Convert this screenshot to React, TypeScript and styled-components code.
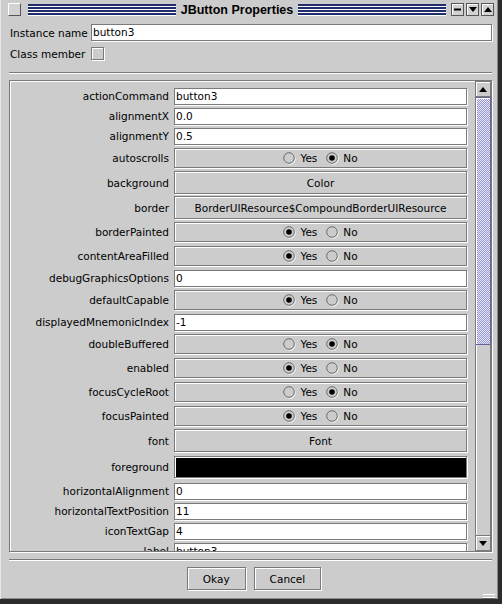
import React from "react";
import styled, { createGlobalStyle, css } from "styled-components";

const GlobalStyle = createGlobalStyle`
  html, body {
    margin: 0;
    padding: 0;
    background: #cccccc;
  }
  body {
    font-family: "DejaVu Sans", "Liberation Sans", sans-serif;
    font-size: 10.5px;
    color: #000;
  }
  * {
    box-sizing: border-box;
  }
`;

const GRAY = "#cccccc";
const DARK = "#7a7a7a";

// metal style etched edge: dark outline, white highlight inside top-left and outside bottom-right
const etched = css`
  border: 1px solid ${DARK};
  box-shadow: inset 1px 1px 0 #fff, 1px 1px 0 #fff;
`;

type Kind = "text" | "bool" | "button" | "color";

type Prop = {
  name: string;
  kind: Kind;
  value: string | boolean;
};

const rows: Prop[] = [
  { name: "actionCommand", kind: "text", value: "button3" },
  { name: "alignmentX", kind: "text", value: "0.0" },
  { name: "alignmentY", kind: "text", value: "0.5" },
  { name: "autoscrolls", kind: "bool", value: false },
  { name: "background", kind: "button", value: "Color" },
  { name: "border", kind: "button", value: "BorderUIResource$CompoundBorderUIResource" },
  { name: "borderPainted", kind: "bool", value: true },
  { name: "contentAreaFilled", kind: "bool", value: true },
  { name: "debugGraphicsOptions", kind: "text", value: "0" },
  { name: "defaultCapable", kind: "bool", value: true },
  { name: "displayedMnemonicIndex", kind: "text", value: "-1" },
  { name: "doubleBuffered", kind: "bool", value: false },
  { name: "enabled", kind: "bool", value: true },
  { name: "focusCycleRoot", kind: "bool", value: false },
  { name: "focusPainted", kind: "bool", value: true },
  { name: "font", kind: "button", value: "Font" },
  { name: "foreground", kind: "color", value: "#000000" },
  { name: "horizontalAlignment", kind: "text", value: "0" },
  { name: "horizontalTextPosition", kind: "text", value: "11" },
  { name: "iconTextGap", kind: "text", value: "4" },
  { name: "label", kind: "text", value: "button3" },
  { name: "margin", kind: "button", value: "Insets" },
];

const rowHeight: Record<Kind, number> = {
  text: 20,
  bool: 24,
  button: 25,
  color: 28,
};

const Window = styled.div`
  position: relative;
  width: 502px;
  height: 604px;
  display: flex;
  flex-direction: column;
  background: ${GRAY};
  border-right: 4px solid #2c2c2c;
  border-bottom: 5px solid #2c2c2c;
  box-shadow: inset 1px 0 0 #e6e6e6, inset -1px -1px 0 #8a8a8a;
`;

/* ---------- title bar ---------- */

const TitleBar = styled.div`
  height: 19px;
  flex: none;
  display: flex;
  align-items: center;
  padding: 0 4px 0 8px;
`;

const MenuBox = styled.div`
  width: 13px;
  height: 13px;
  margin-right: 7px;
  background: #d2d2d2;
  border: 1px solid;
  border-color: #fff #555 #555 #fff;
`;

const Stripes = styled.div`
  flex: 1;
  height: 12px;
  background: repeating-linear-gradient(to bottom, #1f2d6b 0 2px, #ffffff 2px 3px);
`;

const Title = styled.div`
  padding: 0 5px;
  font-family: "Liberation Sans", Arial, sans-serif;
  font-weight: bold;
  font-size: 12.5px;
  white-space: nowrap;
`;

const FrameButtons = styled.div`
  display: flex;
  gap: 2px;
  margin-left: 5px;
`;

const FrameButton = styled.div`
  width: 13px;
  height: 13px;
  display: flex;
  align-items: center;
  justify-content: center;
  background: #d2d2d2;
  border: 1px solid #555;
  box-shadow: inset 1px 1px 0 #fff;
`;

/* ---------- body ---------- */

const Body = styled.div`
  flex: 1;
  display: flex;
  flex-direction: column;
  padding: 5px 6px 0 9px;
`;

const HeaderGrid = styled.div`
  display: grid;
  grid-template-columns: 82px 1fr;
  grid-auto-rows: 17px;
  row-gap: 4px;
  align-items: center;
`;

const HeaderLabel = styled.span`
  padding-left: 1px;
  white-space: nowrap;
`;

const TextField = styled.div`
  height: 17px;
  padding: 0 2px 0 1px;
  background: #fff;
  line-height: 15px;
  white-space: nowrap;
  overflow: hidden;
  ${etched};
`;

const CheckBox = styled.div`
  width: 13px;
  height: 13px;
  background: ${GRAY};
  ${etched};
`;

const Separator = styled.div<{ $gap: number }>`
  flex: none;
  height: 2px;
  margin-top: ${(p) => p.$gap}px;
  border-top: 1px solid ${DARK};
  border-bottom: 1px solid #fff;
`;

const Panel = styled.div`
  flex: none;
  height: 472px;
  margin-top: 6px;
  display: flex;
  ${etched};
`;

const Viewport = styled.div`
  flex: 1;
  overflow: hidden;
  padding: 5px 8px 0 0;
`;

const Row = styled.div<{ $kind: Kind }>`
  height: ${(p) => rowHeight[p.$kind]}px;
  display: grid;
  grid-template-columns: 159px 1fr;
  column-gap: 5px;
  align-items: center;
`;

const PropName = styled.span`
  text-align: right;
  white-space: nowrap;
`;

const ValueBox = styled.div<{ $height: number }>`
  height: ${(p) => p.$height}px;
  display: flex;
  align-items: center;
  justify-content: center;
  background: ${GRAY};
  white-space: nowrap;
  ${etched};
`;

const Swatch = styled.div<{ $color: string }>`
  height: 22px;
  background: ${(p) => p.$color};
  ${etched};
`;

const RadioGroup = styled.div`
  display: flex;
  align-items: center;
  gap: 9px;
`;

const RadioOption = styled.span`
  display: flex;
  align-items: center;
  gap: 4px;
`;

/* ---------- scrollbar ---------- */

const ScrollBar = styled.div`
  width: 16px;
  flex: none;
  display: flex;
  flex-direction: column;
  background: ${GRAY};
  border-left: 1px solid ${DARK};
`;

const ArrowButton = styled.div`
  height: 16px;
  flex: none;
  display: flex;
  align-items: center;
  justify-content: center;
  background: ${GRAY};
  border: 1px solid ${DARK};
  border-left: none;
  box-shadow: inset 1px 1px 0 #fff;
`;

const Thumb = styled.div`
  height: 248px;
  flex: none;
  border: 1px solid #666699;
  border-left: none;
  background-color: #ccccff;
  background-image: repeating-conic-gradient(#9999cc 0 25%, #e6e6ff 0 50%);
  background-size: 2px 2px;
  box-shadow: inset 1px 1px 0 #fff;
`;

const Track = styled.div`
  flex: 1;
  border-right: 1px solid ${DARK};
  box-shadow: inset 1px 0 0 #fff;
`;

/* ---------- footer ---------- */

const Footer = styled.div`
  display: flex;
  justify-content: center;
  gap: 8px;
  margin-top: 6px;
  padding-left: 7px;
`;

const PushButton = styled.div`
  height: 23px;
  min-width: 57px;
  padding: 0 15px;
  display: flex;
  align-items: center;
  justify-content: center;
  background: ${GRAY};
  ${etched};
`;

const Grip = styled.div`
  position: absolute;
  right: 3px;
  bottom: 1px;
  width: 12px;
  height: 4px;
  border-top: 1px solid #fff;
  border-bottom: 1px solid #fff;
  box-shadow: 0 1px 0 #666;
`;

const Triangle = ({ up }: { up?: boolean }) => (
  <svg width="8" height="5" viewBox="0 0 8 5">
    <path d={up ? "M0 5 L4 0 L8 5 Z" : "M0 0 L8 0 L4 5 Z"} fill="#000" />
  </svg>
);

const Radio = ({ checked }: { checked: boolean }) => (
  <svg width="13" height="13" viewBox="0 0 13 13">
    <circle cx="6.9" cy="6.9" r="5.3" fill="none" stroke="#fff" />
    <circle cx="6" cy="6" r="5.3" fill={GRAY} stroke="#6a6a6a" />
    {checked && <circle cx="6" cy="6" r="2.8" fill="#000" />}
  </svg>
);

const Value = ({ prop }: { prop: Prop }) => {
  switch (prop.kind) {
    case "text":
      return <TextField>{prop.value as string}</TextField>;
    case "button":
      return <ValueBox $height={23}>{prop.value as string}</ValueBox>;
    case "color":
      return <Swatch $color={prop.value as string} />;
    case "bool":
      return (
        <ValueBox $height={20}>
          <RadioGroup>
            <RadioOption>
              <Radio checked={prop.value === true} />
              Yes
            </RadioOption>
            <RadioOption>
              <Radio checked={prop.value === false} />
              No
            </RadioOption>
          </RadioGroup>
        </ValueBox>
      );
  }
};

export default function App() {
  return (
    <Window>
      <GlobalStyle />
      <TitleBar>
        <MenuBox />
        <Stripes />
        <Title>JButton Properties</Title>
        <Stripes />
        <FrameButtons>
          <FrameButton>
            <svg width="7" height="3" viewBox="0 0 7 3">
              <rect width="7" height="2" y="0.5" fill="#000" />
            </svg>
          </FrameButton>
          <FrameButton>
            <Triangle />
          </FrameButton>
          <FrameButton>
            <Triangle up />
          </FrameButton>
        </FrameButtons>
      </TitleBar>

      <Body>
        <HeaderGrid>
          <HeaderLabel>Instance name</HeaderLabel>
          <TextField>button3</TextField>
          <HeaderLabel>Class member</HeaderLabel>
          <CheckBox />
        </HeaderGrid>

        <Separator $gap={10} />

        <Panel>
          <Viewport>
            {rows.map((prop) => (
              <Row key={prop.name} $kind={prop.kind}>
                <PropName>{prop.name}</PropName>
                <Value prop={prop} />
              </Row>
            ))}
          </Viewport>
          <ScrollBar>
            <ArrowButton>
              <Triangle up />
            </ArrowButton>
            <Thumb />
            <Track />
            <ArrowButton>
              <Triangle />
            </ArrowButton>
          </ScrollBar>
        </Panel>

        <Separator $gap={7} />

        <Footer>
          <PushButton>Okay</PushButton>
          <PushButton>Cancel</PushButton>
        </Footer>
      </Body>
      <Grip />
    </Window>
  );
}
